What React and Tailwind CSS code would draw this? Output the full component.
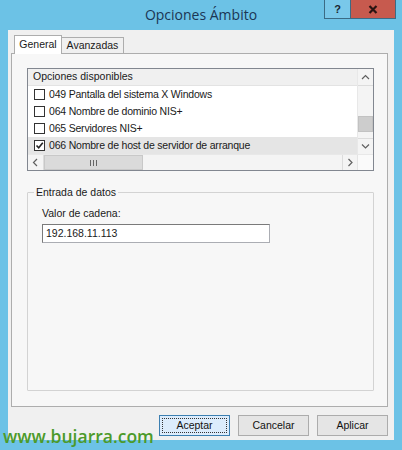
import React from "react";

const ui = { fontFamily: '"Liberation Sans", Arial, sans-serif' };

function Checkbox({ checked }) {
  return (
    <span className="w-[11px] h-[11px] border border-[#333] bg-white flex items-center justify-center shrink-0">
      {checked && (
        <svg width="9" height="9" viewBox="0 0 9 9">
          <path d="M1.5 4.5 L3.7 6.8 L7.8 1.8" fill="none" stroke="#222" strokeWidth="1.6" />
        </svg>
      )}
    </span>
  );
}

function Row({ label, checked, selected }) {
  return (
    <div className={`h-[17px] flex items-center gap-[4px] pl-[6px] ${selected ? "bg-[#e5e5e5]" : ""}`}>
      <Checkbox checked={checked} />
      <span className="whitespace-nowrap tracking-[-0.2px]">{label}</span>
    </div>
  );
}

function Chevron({ dir }) {
  const d = {
    up: "M1 5 L4.5 1.5 L8 5",
    down: "M1 1.5 L4.5 5 L8 1.5",
    left: "M5 1 L1.5 4.5 L5 8",
    right: "M1.5 1 L5 4.5 L1.5 8",
  }[dir];
  const vertical = dir === "up" || dir === "down";
  return (
    <svg width={vertical ? 9 : 7} height={vertical ? 7 : 9} viewBox={vertical ? "0 0 9 7" : "0 0 7 9"}>
      <path d={d} fill="none" stroke="#606060" strokeWidth="1.2" />
    </svg>
  );
}

function Button({ children, focused }) {
  return (
    <button
      className={`w-[71px] h-[21px] border text-[10.5px] text-[#111] ${
        focused ? "border-[#3c7fb1] bg-[#dcecfc] p-[2px]" : "border-[#acacac] bg-[#e5e5e5]"
      }`}
      style={ui}
    >
      {focused ? (
        <span className="w-full h-full flex items-center justify-center border border-dotted border-[#333]">
          {children}
        </span>
      ) : (
        children
      )}
    </button>
  );
}

export default function App() {
  return (
    <div className="w-[402px] h-[450px] bg-[#6cc2e6] relative overflow-hidden" style={ui}>
      {/* title bar */}
      <div className="h-[30px] flex relative">
        <div className="flex-1 flex items-center justify-center pb-[2px]">
          <span className="text-[14px] text-[#1b3654]" style={{ fontFamily: '"Open Sans", sans-serif' }}>
            Opciones Ámbito
          </span>
        </div>
        <div className="absolute right-[6px] top-0 flex">
          <div className="w-[27px] h-[19px] border border-[#3b6b85] border-t-0 bg-[#79c8ea] flex items-center justify-center text-[11px] font-bold text-[#1a2530]">
            ?
          </div>
          <div className="w-[45px] h-[19px] border border-[#3b6b85] border-t-0 border-l-0 bg-[#c75a4e] flex items-center justify-center">
            <svg width="10" height="9" viewBox="0 0 10 9">
              <path d="M1.5 1 L8.5 8 M8.5 1 L1.5 8" stroke="#2a1412" strokeWidth="2.2" />
            </svg>
          </div>
        </div>
      </div>

      {/* client area */}
      <div className="mx-[8px] h-[410px] bg-[#f0f0f0] pt-[5px] text-[10.5px] text-[#1a1a1a]">
        {/* tabs */}
        <div className="flex items-end pl-[6px] h-[18px]">
          <div className="h-[19px] w-[48px] bg-white border border-[#adadad] border-b-0 flex items-center justify-center relative z-10 mb-[-1px]">
            General
          </div>
          <div className="h-[16px] w-[62px] bg-[#f0f0f0] border border-[#adadad] border-l-0 border-b-0 flex items-center justify-center">
            Avanzadas
          </div>
        </div>

        {/* tab panel */}
        <div className="ml-[3px] w-[377px] h-[354px] border border-[#adadad] bg-[#f7f7f7] pt-[14px] pl-[15px]">
          {/* list box */}
          <div className="w-[347px] h-[103px] border border-[#828790] bg-white flex flex-col">
            <div className="flex h-[85px]">
              <div className="flex-1 flex flex-col">
                <div className="h-[17px] bg-[#f0f0f0] border-b border-[#e3e3e3] flex items-center pl-[5px]">
                  Opciones disponibles
                </div>
                <Row label="049 Pantalla del sistema X Windows" />
                <Row label="064 Nombre de dominio NIS+" />
                <Row label="065 Servidores NIS+" />
                <Row label="066 Nombre de host de servidor de arranque" checked selected />
              </div>
              {/* vertical scrollbar */}
              <div className="w-[16px] bg-[#f4f4f4] border-l border-[#e8e8e8] flex flex-col">
                <div className="h-[17px] bg-[#f4f4f4] border-b border-[#dcdcdc] flex items-center justify-center">
                  <Chevron dir="up" />
                </div>
                <div className="flex-1 flex flex-col pt-[30px] pb-[4px]">
                  <div className="h-[16px] bg-[#cdcdcd] border border-[#c2c2c2]" />
                </div>
                <div className="h-[16px] border-t border-[#dcdcdc] flex items-center justify-center">
                  <Chevron dir="down" />
                </div>
              </div>
            </div>
            {/* horizontal scrollbar */}
            <div className="flex-1 flex border-t border-[#e8e8e8]">
              <div className="w-[16px] bg-[#f4f4f4] border-r border-[#dcdcdc] flex items-center justify-center">
                <Chevron dir="left" />
              </div>
              <div className="w-[99px] bg-[#dadada] border border-[#c8c8c8] flex items-center justify-center gap-[2px]">
                <span className="w-px h-[6px] bg-[#666]" />
                <span className="w-px h-[6px] bg-[#666]" />
                <span className="w-px h-[6px] bg-[#666]" />
              </div>
              <div className="flex-1 bg-[#f4f4f4]" />
              <div className="w-[15px] bg-[#f4f4f4] border-l border-[#dcdcdc] flex items-center justify-center">
                <Chevron dir="right" />
              </div>
              <div className="w-[16px] bg-[#fafafa] border-l border-[#e4e4e4]" />
            </div>
          </div>

          {/* group box */}
          <div className="relative mt-[21px] w-[347px] h-[199px] border border-[#d3d3d3] rounded-[1px]">
            <span className="absolute left-[6px] top-[-8px] px-[2px] bg-[#f7f7f7] leading-[14px]">
              Entrada de datos
            </span>
            <div className="pt-[13px] pl-[14px]">
              <div className="leading-[14px]">Valor de cadena:</div>
              <div className="mt-[4px] w-[228px] h-[19px] bg-white border border-[#abadb3] border-t-[#7a7a7a] border-l-[#7a7a7a] flex items-center pl-[3px]">
                192.168.11.113
              </div>
            </div>
          </div>
        </div>

        {/* buttons */}
        <div className="flex justify-end gap-[8px] pr-[6px] mt-[8px]">
          <Button focused>Aceptar</Button>
          <Button>Cancelar</Button>
          <Button>Aplicar</Button>
        </div>
      </div>

      {/* watermark */}
      <div
        className="absolute left-[3px] bottom-[4px] text-[17.5px] leading-[20px] text-[#4c9a2a] font-semibold"
        style={{ fontFamily: '"Open Sans", sans-serif' }}
      >
        www.bujarra.com
      </div>
    </div>
  );
}
